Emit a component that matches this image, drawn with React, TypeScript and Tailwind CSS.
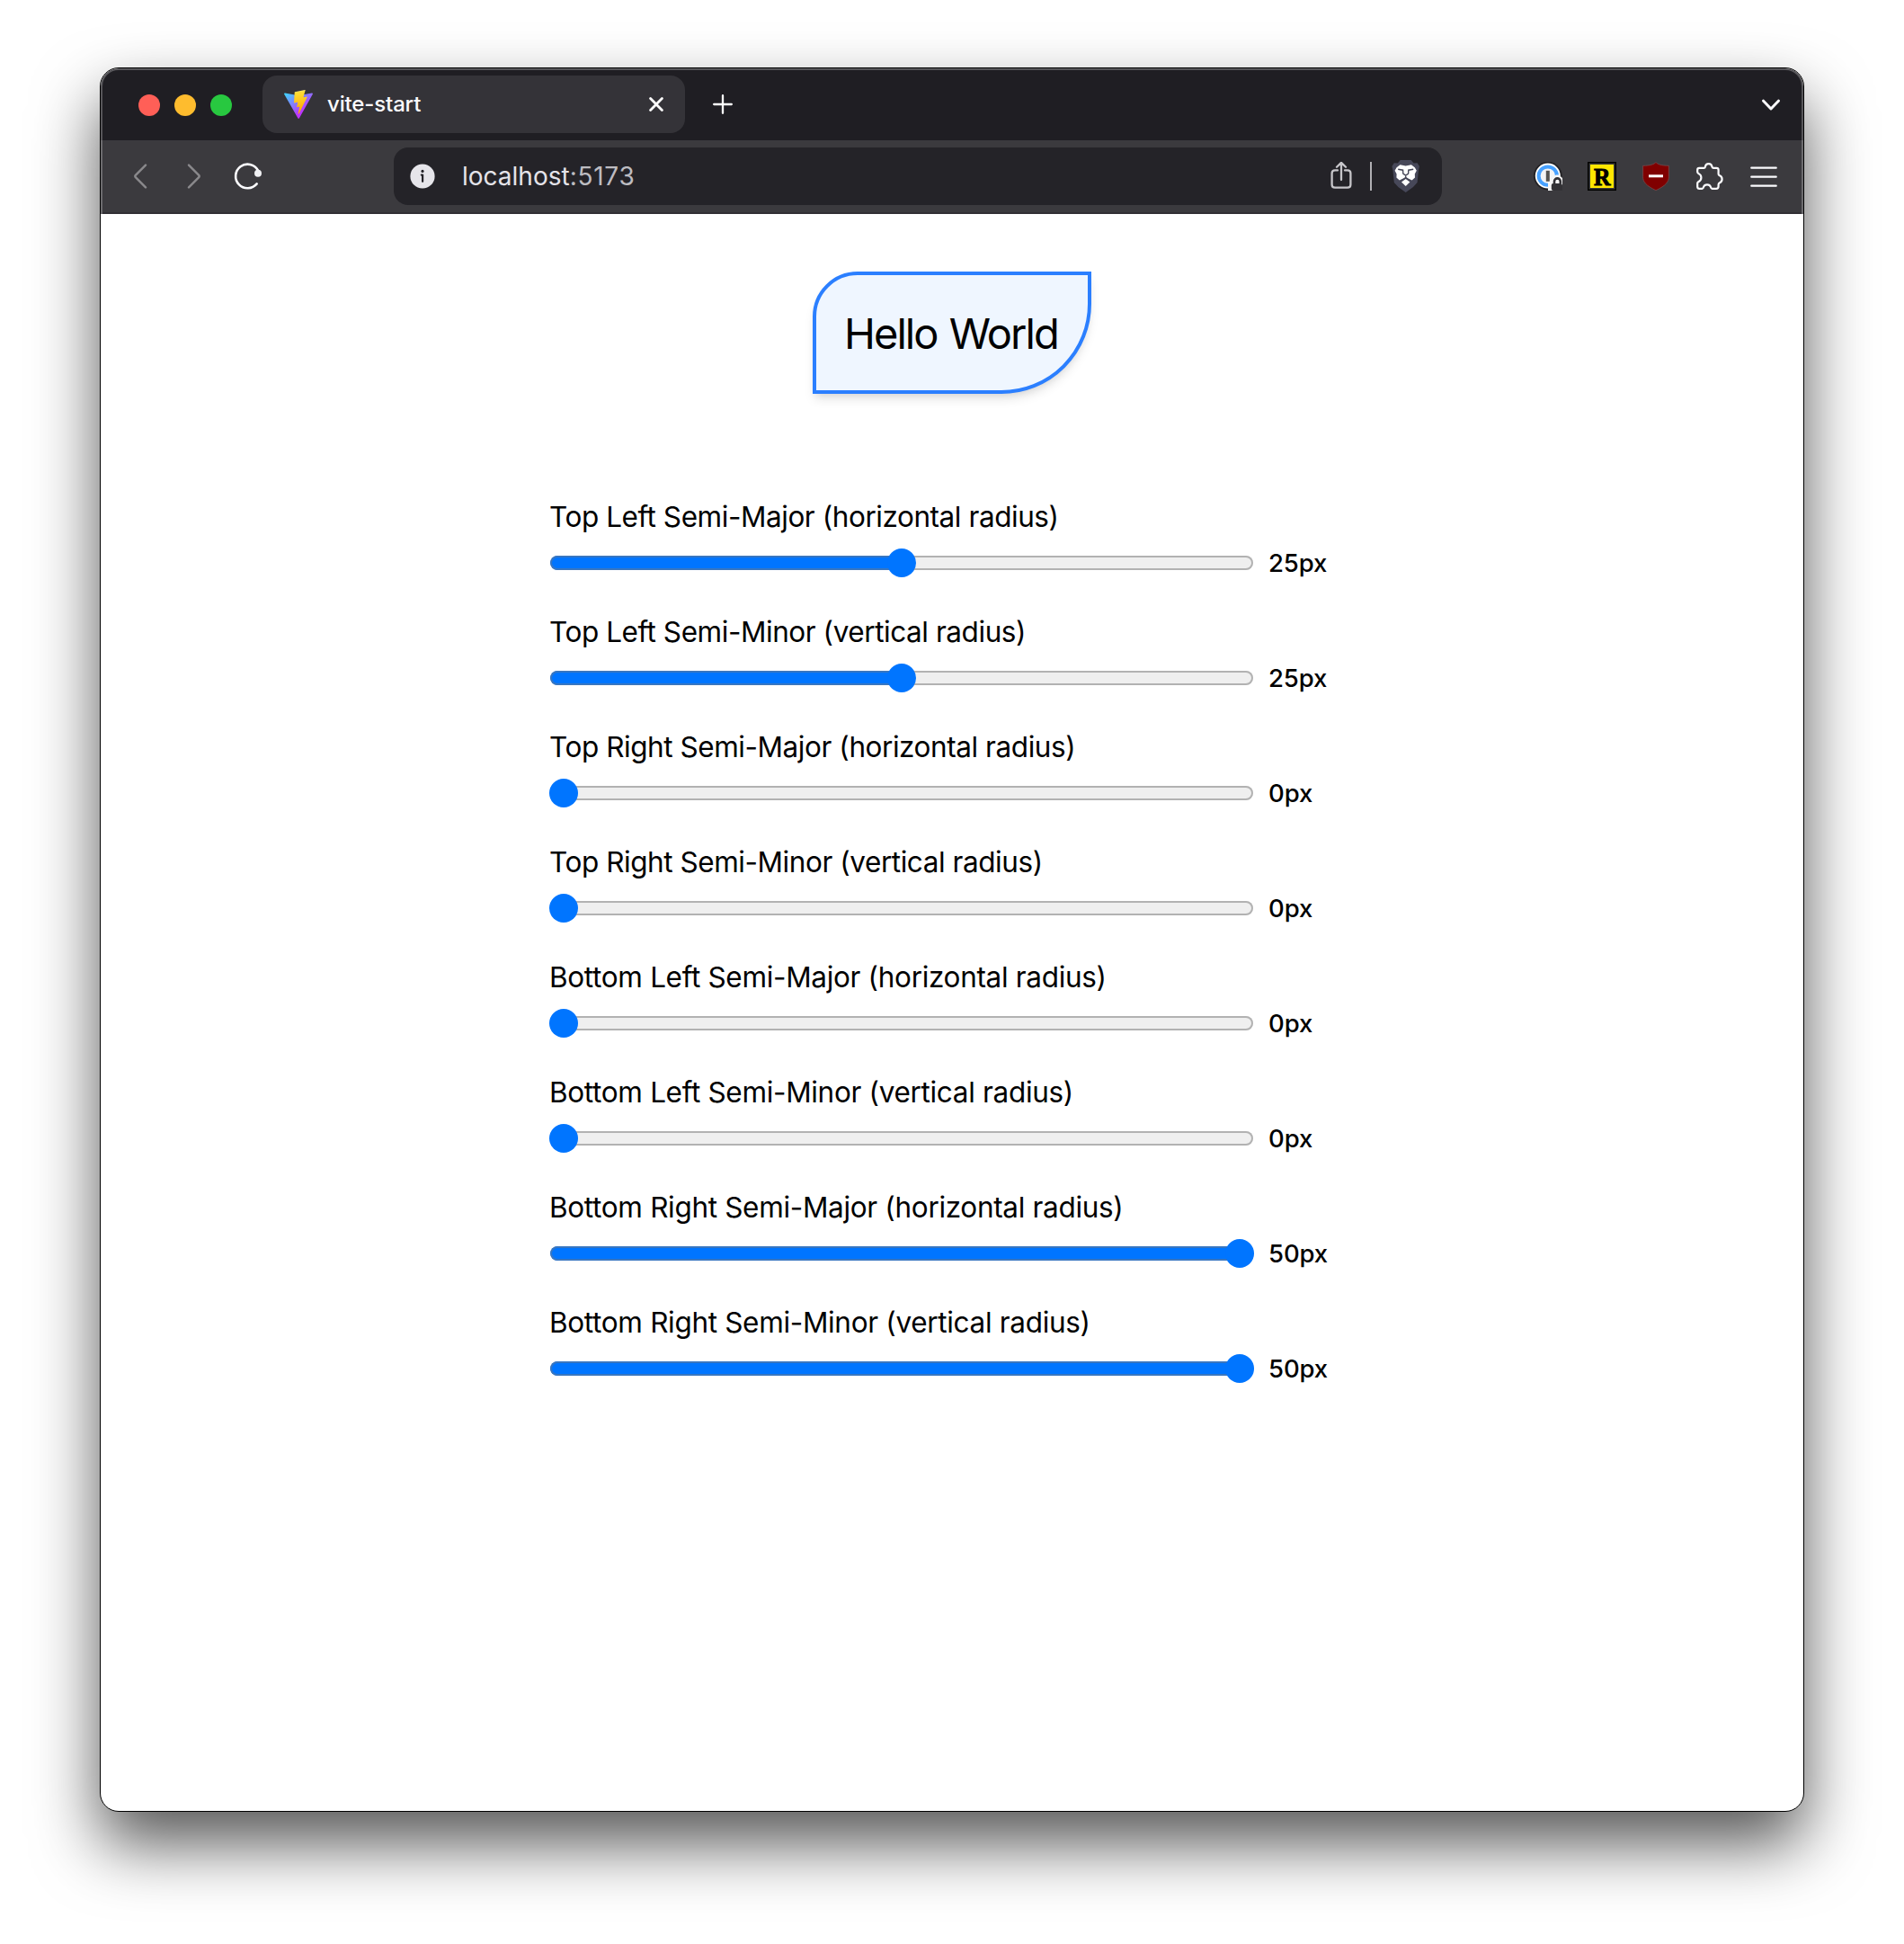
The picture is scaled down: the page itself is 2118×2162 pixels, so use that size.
import { useState } from "react";

const SLIDERS = [
  { label: "Top Left Semi-Major (horizontal radius)", value: 25 },
  { label: "Top Left Semi-Minor (vertical radius)", value: 25 },
  { label: "Top Right Semi-Major (horizontal radius)", value: 0 },
  { label: "Top Right Semi-Minor (vertical radius)", value: 0 },
  { label: "Bottom Left Semi-Major (horizontal radius)", value: 0 },
  { label: "Bottom Left Semi-Minor (vertical radius)", value: 0 },
  { label: "Bottom Right Semi-Major (horizontal radius)", value: 50 },
  { label: "Bottom Right Semi-Minor (vertical radius)", value: 50 },
];

const MAX = 50;

function ViteLogo() {
  return (
    <svg className="size-8" viewBox="0 0 256 257">
      <defs>
        <linearGradient id="vite-body" x1="-.828%" x2="57.636%" y1="7.652%" y2="78.411%">
          <stop offset="0%" stopColor="#41D1FF" />
          <stop offset="100%" stopColor="#BD34FE" />
        </linearGradient>
        <linearGradient id="vite-bolt" x1="43.376%" x2="50.316%" y1="2.242%" y2="89.03%">
          <stop offset="0%" stopColor="#FFEA83" />
          <stop offset="8.333%" stopColor="#FFDD35" />
          <stop offset="100%" stopColor="#FFA800" />
        </linearGradient>
      </defs>
      <path
        fill="url(#vite-body)"
        d="M255.153 37.938L134.897 252.976c-2.483 4.44-8.862 4.466-11.382.048L.875 37.958c-2.746-4.814 1.371-10.646 6.827-9.67l120.385 21.517a6.537 6.537 0 0 0 2.322-.004l117.867-21.483c5.438-.991 9.574 4.796 6.877 9.62Z"
      />
      <path
        fill="url(#vite-bolt)"
        d="M185.432.063L96.44 17.501a3.268 3.268 0 0 0-2.634 3.014l-5.474 92.456a3.268 3.268 0 0 0 3.997 3.378l24.777-5.718c2.318-.535 4.413 1.507 3.936 3.838l-7.361 36.047c-.495 2.426 1.782 4.5 4.151 3.78l15.304-4.649c2.372-.72 4.652 1.36 4.15 3.788l-11.698 56.621c-.732 3.542 3.979 5.473 5.943 2.437l1.313-2.028l72.516-144.72c1.215-2.423-.88-5.186-3.54-4.672l-25.505 4.922c-2.396.462-4.435-1.77-3.759-4.114l16.646-57.705c.677-2.35-1.37-4.583-3.769-4.113Z"
      />
    </svg>
  );
}

function TabBar() {
  return (
    <div className="flex h-20 items-center bg-[#1f1e23] pr-[26px] pl-[42px]">
      <div className="flex gap-4 pt-0.5">
        <span className="size-6 rounded-full bg-[#ff5f57]" />
        <span className="size-6 rounded-full bg-[#febc2e]" />
        <span className="size-6 rounded-full bg-[#28c840]" />
      </div>
      <div className="ml-[34px] flex h-16 w-[470px] items-center rounded-2xl bg-[#343338] px-6">
        <ViteLogo />
        <span className="ml-4 flex-1 text-2xl font-medium tracking-[-0.15px] text-[#fbfbfe]">
          vite-start
        </span>
        <svg className="size-4" viewBox="0 0 16 16" stroke="#fff" strokeWidth="2.8" strokeLinecap="round">
          <path d="M1.6 1.6 14.4 14.4M14.4 1.6 1.6 14.4" />
        </svg>
      </div>
      <svg className="ml-[31px] size-[22px]" viewBox="0 0 22 22" stroke="#fff" strokeWidth="2.3" strokeLinecap="round">
        <path d="M11 1.2V20.8M1.2 11H20.8" />
      </svg>
      <svg className="ml-auto h-[13px] w-5" viewBox="0 0 20 13" fill="none" stroke="#fbfbfe" strokeWidth="3" strokeLinecap="round" strokeLinejoin="round">
        <path d="M1.6 2.2 10 11 18.4 2.2" />
      </svg>
    </div>
  );
}

function Extensions() {
  return (
    <div className="ml-[102px] flex gap-7">
      <svg className="size-8" viewBox="0 0 32 32">
        <circle cx="15.8" cy="15.6" r="15.8" fill="#222124" />
        <circle cx="15.8" cy="15.6" r="14" fill="#fff" />
        <circle cx="15.8" cy="15.6" r="10.2" fill="#f4f4f4" stroke="#47a1ff" strokeWidth="4" />
        <rect x="13.8" y="9.8" width="4" height="12" fill="#55534f" />
        <path d="M16 32V22.4L20 20.8 21.3 17 25 14.4H28L32 18V32Z" fill="#f7f7f7" />
        <path d="M23 24.5V21.8a3.4 3.4 0 0 1 6.8 0V24.5" fill="none" stroke="#333236" strokeWidth="2.6" />
        <path d="M19.8 26a2 2 0 0 1 2-2H30.5L32 25.4V32H21.8a2 2 0 0 1-2-2Z" fill="#333236" />
      </svg>
      <svg className="size-8" viewBox="0 0 32 32">
        <rect width="32" height="32" fill="#000" />
        <rect x="1.5" y="1.5" width="29" height="29" fill="#3a3a35" />
        <rect x="3" y="3" width="26" height="26" fill="#ffe600" />
        <text x="16.2" y="25.8" textAnchor="middle" fontFamily="Liberation Serif, serif" fontWeight="700" fontSize="28" stroke="#000" strokeWidth="1" textLength="18.5" lengthAdjust="spacingAndGlyphs">
          R
        </text>
      </svg>
      <svg className="size-8" viewBox="0 0 32 32">
        <path
          d="M16 .5C18 2.7 22 4.2 30.4 4.3V16.5C30.4 22 27.5 26.2 16 31.7 4.5 26.2 1.6 22 1.6 16.5V4.3C10 4.2 14 2.7 16 .5Z"
          fill="#800000"
          stroke="#7d5052"
          strokeWidth=".7"
        />
        <rect x="8" y="14.3" width="16" height="3" fill="#fff" />
      </svg>
      <svg className="size-8" viewBox="0 0 32 32" fill="none" stroke="#fbfbfe" strokeWidth="2.2" strokeLinejoin="round">
        <path d="M4.2 6.8H9.5C10.6 6.8 10.9 6.2 11 5.2 11.3 3.3 12.8 2.2 14.7 2.2S18 3.3 18.4 5.2C18.5 6.2 18.9 6.8 20 6.8H23.5Q25.6 6.8 25.6 9V13.5C25.6 14.6 26.2 15 27 15.3 28.6 16 29.6 17.5 29.6 19.3S28.6 22.6 27 23.3C26.2 23.7 25.6 24 25.6 25.2V27.3Q25.6 29.9 23 29.9H18.5C17.5 29.9 17.3 29.2 17 28 16.4 26.3 14.8 25.4 13 25.4S9.6 26.3 9 28C8.7 29.2 8.5 29.9 7.5 29.9H4.4Q2.2 29.9 2.2 27.8V23.8C2.2 22.6 3 22.4 4 21.8 5.5 21 6.4 19.4 6.4 17.6S5.5 14.2 4 13.4C3 12.8 2.2 12.4 2.2 11.3V9Q2.2 6.8 4.2 6.8Z" />
      </svg>
      <svg className="size-8" viewBox="0 0 32 32" stroke="#fbfbfe" strokeWidth="2.3" strokeLinecap="round">
        <path d="M2.3 6.7H29.7M2.3 16.7H29.7M2.3 26.7H29.7" />
      </svg>
    </div>
  );
}

function Toolbar() {
  return (
    <div className="flex h-[82px] items-center border-b-2 border-[#312f34] bg-[#3b3a3e] pl-9 text-[#fbfbfe]">
      <svg className="h-7 w-4" viewBox="0 0 16 28" fill="none" stroke="#8a898c" strokeWidth="2.4" strokeLinecap="round" strokeLinejoin="round">
        <path d="M14 1.6 2.8 12.8Q1.8 14 2.8 15.2L14 26.4" />
      </svg>
      <svg className="ml-11 h-7 w-4" viewBox="0 0 16 28" fill="none" stroke="#8a898c" strokeWidth="2.4" strokeLinecap="round" strokeLinejoin="round">
        <path d="M2 1.6 13.2 12.8Q14.2 14 13.2 15.2L2 26.4" />
      </svg>
      <svg className="ml-9 size-8" viewBox="0 0 32 32" fill="none">
        <path d="M25.7 24.4A13.3 13.3 0 1 1 27 9.4" stroke="#fbfbfe" strokeWidth="2.6" strokeLinecap="round" />
        <circle cx="27" cy="12.7" r="4" fill="#f0f0f3" />
      </svg>

      <div className="ml-[146px] flex h-16 w-[1166px] items-center rounded-2xl bg-[#242328] pr-6 pl-[18px]">
        <svg className="size-7" viewBox="0 0 28 28">
          <circle cx="14" cy="14" r="13.6" fill="#e6e5ea" />
          <circle cx="14" cy="8.4" r="1.6" fill="#242328" />
          <path d="M12.8 12.6H14.1V19.8" fill="none" stroke="#242328" strokeWidth="2.2" strokeLinecap="round" strokeLinejoin="round" />
        </svg>
        <span className="ml-[30px] flex-1 text-[28px] leading-8 text-[#e4e3e9]">
          localhost<span className="tracking-[0.75px] text-[#bdbcc1]">:5173</span>
        </span>
        <svg className="size-8" viewBox="0 0 32 32" fill="none" stroke="#c6c5c9" strokeWidth="2.3" strokeLinecap="round" strokeLinejoin="round">
          <path d="M12 9.4H9Q5.6 9.4 5.6 12.8V25.2Q5.6 28.6 9 28.6H23Q26.4 28.6 26.4 25.2V12.8Q26.4 9.4 23 9.4H20M16 20V1M11 5.8 16 .9 21 5.8" />
        </svg>
        <span className="ml-4 h-8 w-0.5 bg-[#b0afb3]" />
        <svg className="ml-[22px] h-[38px] w-8" viewBox="0 0 32 38">
          <path d="M9.8 1H21.6L24.6 4.4 28.6 4.2 31 8 30 12 28.6 26 24 31 15.7 37 7.4 31 2.8 26 1.4 12 .4 8 2.8 4.2 6.8 4.4Z" fill="#474859" />
          <path d="M5.6 9.2 9.5 6.2 15.7 7.4 21.9 6.2 25.8 9.2 27.8 12.8 25.8 16.4 26 20.6 22.6 23.6 18.6 21.4 15.7 19.8 12.8 21.4 8.8 23.6 5.4 20.6 5.6 16.4 3.6 12.8Z" fill="#fff" />
          <path d="M15.7 22 20.4 25.4 15.7 30 11 25.4Z" fill="#fff" />
          <path d="M7.2 11.2 12.6 12.2 12.8 16.2 15.7 18.2 18.6 16.2 18.8 12.2 24.2 11.2M15.7 18.2V21.2" fill="none" stroke="#474859" strokeWidth="1.4" />
        </svg>
      </div>
      <Extensions />
    </div>
  );
}

function Slider({ label, value, onChange }: { label: string; value: number; onChange: (v: number) => void }) {
  const ratio = value / MAX;
  const tracking = label.startsWith("Bottom") ? "tracking-[-0.32px]" : "tracking-[-0.44px]";
  return (
    <div className="h-32">
      <label className={`block text-[31.5px] leading-[48px] whitespace-nowrap ${tracking}`}>{label}</label>
      <div className="mt-[7px] flex h-10 items-center gap-4">
        <div className="relative flex h-8 w-[784px] items-center px-px">
          <div className="h-4 w-full overflow-hidden rounded-full bg-[#efefef] inset-ring-2 inset-ring-[#b2b2b2]">
            <div className="h-4 overflow-hidden" style={{ width: `${ratio * 100}%` }}>
              <div className="h-4 w-[782px] rounded-full bg-[#0075ff] inset-ring-2 inset-ring-[#3876c0]" />
            </div>
          </div>
          <span
            className="absolute top-0 size-8 rounded-full bg-[#0075ff]"
            style={{ left: `calc(${ratio * 100}% - ${ratio * 32}px)` }}
          />
          <input
            type="range"
            min={0}
            max={MAX}
            value={value}
            aria-label={label}
            onChange={(e) => onChange(Number(e.target.value))}
            className="absolute inset-0 size-full opacity-0"
          />
        </div>
        <span className="text-[27.5px] leading-10 font-medium tracking-[-0.1px]">{value}px</span>
      </div>
    </div>
  );
}

export default function App() {
  const [values, setValues] = useState(SLIDERS.map((s) => s.value));
  const r = values.map((v) => `${v * 2}px`);
  return (
    <div className="h-[2162px] w-[2118px] overflow-hidden bg-white px-[111px] pt-[75px] font-[Inter,sans-serif]">
      <div className="relative h-[1940px] rounded-[21px] border border-black bg-white shadow-[0_36px_72px_rgba(0,0,0,0.66)]">
        <div className="overflow-hidden rounded-t-[20px]">
          <TabBar />
          <Toolbar />
        </div>
        <div className="pointer-events-none absolute inset-x-0 top-0 h-[162px] rounded-t-[20px] border-2 border-b-0 border-white/25" />

        <main className="flex flex-col items-center pt-16 text-black">
          <div
            className="h-[136px] w-[310px] border-4 border-[#2b7fff] bg-[#eff6ff] py-8 pl-8 shadow-[0_8px_12px_-2px_rgba(0,0,0,0.1),0_4px_8px_-4px_rgba(0,0,0,0.1)]"
            style={{ borderRadius: `${r[0]} ${r[2]} ${r[6]} ${r[4]} / ${r[1]} ${r[3]} ${r[7]} ${r[5]}` }}
          >
            <h1 className="-ml-px text-[47px] leading-[66px] tracking-[-1.95px] whitespace-nowrap [word-spacing:2px]">
              Hello World
            </h1>
          </div>
          <div className="mt-[113px] w-4xl">
            {SLIDERS.map((s, i) => (
              <Slider
                key={s.label}
                label={s.label}
                value={values[i]}
                onChange={(v) => setValues((old) => old.map((o, j) => (j === i ? v : o)))}
              />
            ))}
          </div>
        </main>
      </div>
    </div>
  );
}
